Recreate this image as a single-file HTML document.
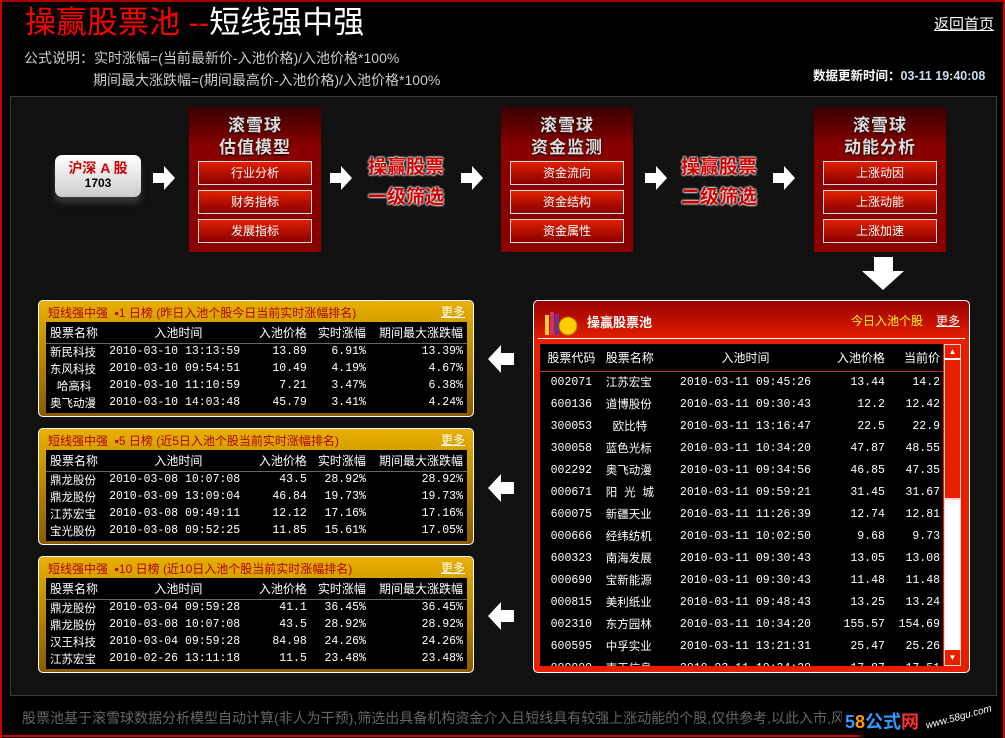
<!DOCTYPE html>
<html><head><meta charset="utf-8"><style>
*{margin:0;padding:0;box-sizing:border-box}
body{width:1005px;height:738px;background:#000;position:relative;overflow:hidden;font-family:"Liberation Sans","Noto Sans CJK SC",sans-serif;color:#fff}
.a{position:absolute}
.frame{left:0;top:0;width:1005px;height:738px;border-top:2px solid #a00;border-left:2px solid #c00;border-right:2px solid #c00}
.title{left:25px;top:3px;font-size:31px;line-height:40px;white-space:nowrap}
.f{font-size:14px;color:#ccc;white-space:nowrap}
.panel{left:10px;top:96px;width:987px;height:600px;background:#111;border:1px solid #3a3a3a}
.hs{left:55px;top:155px;width:86px;height:42px;border-radius:7px;background:linear-gradient(#fff,#ccc);text-align:center;font-weight:bold;box-shadow:0 6px 6px rgba(80,80,80,.6)}
.rb{width:132px;height:145px;background:linear-gradient(#3a0000 0,#8a0000 40px,#8a0000);text-align:center}
.rb .t{font-size:17px;font-weight:bold;color:#ddd;line-height:22px;margin-top:8px;letter-spacing:1px;text-shadow:0 1px 2px #000}
.btn{position:absolute;left:9px;width:114px;height:24px;border:1px solid #ddd;background:linear-gradient(#e02000,#8a0000);font-size:12px;line-height:22px;color:#fff}
.sx{font-size:19px;font-weight:bold;color:#c00;text-shadow:0 0 2px #fff,0 0 2px #fff,0 0 2px #fff;line-height:30px;white-space:nowrap}
.lt{left:38px;width:436px;height:117px;border-radius:5px;background:linear-gradient(#e8b000,#8a5a00);border:1px solid #fff}
.lt .h{position:absolute;left:9px;top:3px;font-size:12px;color:#b00000;white-space:nowrap}
.lt .m{position:absolute;right:8px;top:2px;font-size:12px;color:#fff;text-decoration:underline}
.lt .b{position:absolute;left:7px;top:21px;width:421px;height:91px;background:#000}
table{border-collapse:collapse}
.lt table{font-family:"Liberation Mono","Noto Sans CJK SC",monospace;font-size:11.5px;width:421px}
.lt td{height:17px;padding:0 4px;white-space:nowrap}
.lt tr.hd td{height:21px;border-bottom:1px solid #666;font-family:"Liberation Sans","Noto Sans CJK SC",sans-serif;font-size:12px}
.r{text-align:right}.c{text-align:center}
.la{width:26px;height:28px}
.rp{left:533px;top:300px;width:437px;height:373px;background:linear-gradient(#900 0,#e82000 40px,#e82000);border:1px solid #fff;border-radius:5px}
.rt{position:absolute;left:6px;top:43px;width:403px;height:322px;background:#000;overflow:hidden}
.rt table{font-family:"Liberation Mono","Noto Sans CJK SC",monospace;font-size:11.5px;width:403px}
.rt td{height:22px;white-space:nowrap;padding:0 3px}
.rt tr.hd td{height:27px;border-bottom:1px solid #a33;font-family:"Liberation Sans","Noto Sans CJK SC",sans-serif;font-size:12px}
</style></head><body>
<div class="a frame"></div>
<div class="a title"><span style="color:#f00">操赢股票池 --</span><span style="color:#fff">短线强中强</span></div>
<div class="a" style="left:934px;top:13px;font-size:15px;text-decoration:underline">返回首页</div>
<div class="a f" style="left:24px;top:48px">公式说明：实时涨幅=(当前最新价-入池价格)/入池价格*100%</div>
<div class="a f" style="left:93px;top:70px">期间最大涨跌幅=(期间最高价-入池价格)/入池价格*100%</div>
<div class="a" style="left:813px;top:65px;font-size:12.5px;font-weight:bold;white-space:nowrap">数据更新时间：<span style="color:#cde">03-11 19:40:08</span></div>
<div class="a panel"></div>

<div class="a hs"><div style="color:#c00;font-size:14px;margin-top:5px;line-height:16px">沪深 A 股</div><div style="color:#000;font-size:12px;line-height:14px">1703</div></div>

<svg class="a" style="left:153px;top:166px" width="23" height="25"><path d="M0 7H11V0L22 12L11 24V17H0Z" fill="#fff"/></svg>
<svg class="a" style="left:330px;top:166px" width="23" height="25"><path d="M0 7H11V0L22 12L11 24V17H0Z" fill="#fff"/></svg>
<svg class="a" style="left:461px;top:166px" width="23" height="25"><path d="M0 7H11V0L22 12L11 24V17H0Z" fill="#fff"/></svg>
<svg class="a" style="left:645px;top:166px" width="23" height="25"><path d="M0 7H11V0L22 12L11 24V17H0Z" fill="#fff"/></svg>
<svg class="a" style="left:773px;top:166px" width="23" height="25"><path d="M0 7H11V0L22 12L11 24V17H0Z" fill="#fff"/></svg>

<div class="a rb" style="left:189px;top:107px"><div class="t">滚雪球<br>估值模型</div>
<div class="btn" style="top:54px">行业分析</div><div class="btn" style="top:83px">财务指标</div><div class="btn" style="top:112px">发展指标</div></div>
<div class="a rb" style="left:501px;top:107px"><div class="t">滚雪球<br>资金监测</div>
<div class="btn" style="top:54px">资金流向</div><div class="btn" style="top:83px">资金结构</div><div class="btn" style="top:112px">资金属性</div></div>
<div class="a rb" style="left:814px;top:107px"><div class="t">滚雪球<br>动能分析</div>
<div class="btn" style="top:54px">上涨动因</div><div class="btn" style="top:83px">上涨动能</div><div class="btn" style="top:112px">上涨加速</div></div>

<div class="a sx" style="left:368px;top:153px">操赢股票<br>一级筛选</div>
<div class="a sx" style="left:681px;top:153px">操赢股票<br>二级筛选</div>

<svg class="a" style="left:862px;top:257px" width="43" height="34"><path d="M12 0H31V14H42L21 33L0 14H12Z" fill="#fff"/></svg>

<div class="a lt" style="top:300px"><div class="h">短线强中强 &nbsp;▪1 日榜 (昨日入池个股今日当前实时涨幅排名)</div><div class="m">更多</div>
<div class="b"><table><tr class="hd"><td>股票名称</td><td class="c">入池时间</td><td class="r">入池价格</td><td class="r">实时涨幅</td><td class="r">期间最大涨跌幅</td></tr>
<tr><td>新民科技</td><td>2010-03-10 13:13:59</td><td class="r">13.89</td><td class="r">6.91%</td><td class="r">13.39%</td></tr>
<tr><td>东风科技</td><td>2010-03-10 09:54:51</td><td class="r">10.49</td><td class="r">4.19%</td><td class="r">4.67%</td></tr>
<tr><td>&nbsp;哈高科</td><td>2010-03-10 11:10:59</td><td class="r">7.21</td><td class="r">3.47%</td><td class="r">6.38%</td></tr>
<tr><td>奥飞动漫</td><td>2010-03-10 14:03:48</td><td class="r">45.79</td><td class="r">3.41%</td><td class="r">4.24%</td></tr></table></div></div>

<div class="a lt" style="top:428px"><div class="h">短线强中强 &nbsp;▪5 日榜 (近5日入池个股当前实时涨幅排名)</div><div class="m">更多</div>
<div class="b"><table><tr class="hd"><td>股票名称</td><td class="c">入池时间</td><td class="r">入池价格</td><td class="r">实时涨幅</td><td class="r">期间最大涨跌幅</td></tr>
<tr><td>鼎龙股份</td><td>2010-03-08 10:07:08</td><td class="r">43.5</td><td class="r">28.92%</td><td class="r">28.92%</td></tr>
<tr><td>鼎龙股份</td><td>2010-03-09 13:09:04</td><td class="r">46.84</td><td class="r">19.73%</td><td class="r">19.73%</td></tr>
<tr><td>江苏宏宝</td><td>2010-03-08 09:49:11</td><td class="r">12.12</td><td class="r">17.16%</td><td class="r">17.16%</td></tr>
<tr><td>宝光股份</td><td>2010-03-08 09:52:25</td><td class="r">11.85</td><td class="r">15.61%</td><td class="r">17.05%</td></tr></table></div></div>

<div class="a lt" style="top:556px"><div class="h">短线强中强 &nbsp;▪10 日榜 (近10日入池个股当前实时涨幅排名)</div><div class="m">更多</div>
<div class="b"><table><tr class="hd"><td>股票名称</td><td class="c">入池时间</td><td class="r">入池价格</td><td class="r">实时涨幅</td><td class="r">期间最大涨跌幅</td></tr>
<tr><td>鼎龙股份</td><td>2010-03-04 09:59:28</td><td class="r">41.1</td><td class="r">36.45%</td><td class="r">36.45%</td></tr>
<tr><td>鼎龙股份</td><td>2010-03-08 10:07:08</td><td class="r">43.5</td><td class="r">28.92%</td><td class="r">28.92%</td></tr>
<tr><td>汉王科技</td><td>2010-03-04 09:59:28</td><td class="r">84.98</td><td class="r">24.26%</td><td class="r">24.26%</td></tr>
<tr><td>江苏宏宝</td><td>2010-02-26 13:11:18</td><td class="r">11.5</td><td class="r">23.48%</td><td class="r">23.48%</td></tr></table></div></div>

<svg class="a la" style="left:488px;top:345px" viewBox="0 0 26 28"><path d="M26 8H13V0L0 14L13 28V20H26Z" fill="#fff"/></svg>
<svg class="a la" style="left:488px;top:474px" viewBox="0 0 26 28"><path d="M26 8H13V0L0 14L13 28V20H26Z" fill="#fff"/></svg>
<svg class="a la" style="left:488px;top:602px" viewBox="0 0 26 28"><path d="M26 8H13V0L0 14L13 28V20H26Z" fill="#fff"/></svg>

<div class="a rp">
<svg class="a" style="left:10px;top:8px" width="34" height="28"><rect x="1" y="6" width="4" height="20" fill="#fc3"/><rect x="6" y="3" width="4" height="23" fill="#c36"/><rect x="11" y="5" width="4" height="21" fill="#639"/><circle cx="24" cy="17" r="9" fill="#fc0" stroke="#a70"/></svg>
<div class="a" style="left:53px;top:11px;font-size:13px;font-weight:bold">操赢股票池</div>
<div class="a" style="left:317px;top:11px;font-size:12px;color:#ff0">今日入池个股</div>
<div class="a" style="left:402px;top:11px;font-size:12px;text-decoration:underline">更多</div>
<div class="a" style="left:4px;top:37px;width:427px;height:1px;background:#fff"></div>
<div class="rt"><table><tr class="hd"><td class="c">股票代码</td><td>股票名称</td><td class="c">入池时间</td><td class="r">入池价格</td><td class="r">当前价</td></tr>
<tr><td class="c">002071</td><td>江苏宏宝</td><td class="c">2010-03-11 09:45:26</td><td class="r">13.44</td><td class="r">14.2</td></tr>
<tr><td class="c">600136</td><td>道博股份</td><td class="c">2010-03-11 09:30:43</td><td class="r">12.2</td><td class="r">12.42</td></tr>
<tr><td class="c">300053</td><td>&nbsp;欧比特</td><td class="c">2010-03-11 13:16:47</td><td class="r">22.5</td><td class="r">22.9</td></tr>
<tr><td class="c">300058</td><td>蓝色光标</td><td class="c">2010-03-11 10:34:20</td><td class="r">47.87</td><td class="r">48.55</td></tr>
<tr><td class="c">002292</td><td>奥飞动漫</td><td class="c">2010-03-11 09:34:56</td><td class="r">46.85</td><td class="r">47.35</td></tr>
<tr><td class="c">000671</td><td>阳 光 城</td><td class="c">2010-03-11 09:59:21</td><td class="r">31.45</td><td class="r">31.67</td></tr>
<tr><td class="c">600075</td><td>新疆天业</td><td class="c">2010-03-11 11:26:39</td><td class="r">12.74</td><td class="r">12.81</td></tr>
<tr><td class="c">000666</td><td>经纬纺机</td><td class="c">2010-03-11 10:02:50</td><td class="r">9.68</td><td class="r">9.73</td></tr>
<tr><td class="c">600323</td><td>南海发展</td><td class="c">2010-03-11 09:30:43</td><td class="r">13.05</td><td class="r">13.08</td></tr>
<tr><td class="c">000690</td><td>宝新能源</td><td class="c">2010-03-11 09:30:43</td><td class="r">11.48</td><td class="r">11.48</td></tr>
<tr><td class="c">000815</td><td>美利纸业</td><td class="c">2010-03-11 09:48:43</td><td class="r">13.25</td><td class="r">13.24</td></tr>
<tr><td class="c">002310</td><td>东方园林</td><td class="c">2010-03-11 10:34:20</td><td class="r">155.57</td><td class="r">154.69</td></tr>
<tr><td class="c">600595</td><td>中孚实业</td><td class="c">2010-03-11 13:21:31</td><td class="r">25.47</td><td class="r">25.26</td></tr>
<tr><td class="c">000000</td><td>南天信息</td><td class="c">2010-03-11 10:34:20</td><td class="r">17.87</td><td class="r">17.51</td></tr></table></div>
<div class="a" style="left:410px;top:43px;width:17px;height:322px;background:#fff;border:1px solid #fcc">
<div style="height:155px;background:#e82000;border-bottom:2px solid #fcc"></div>
<div class="a" style="left:0;top:0;width:15px;height:15px;background:#e82000;border-bottom:2px solid #fff;color:#fff;font-size:8px;text-align:center;line-height:13px">▲</div>
<div class="a" style="left:0;bottom:0;width:15px;height:15px;background:#e82000;color:#fff;font-size:8px;text-align:center;line-height:15px">▼</div></div>
</div>

<div class="a" style="left:22px;top:708px;font-size:14px;color:#666;white-space:nowrap;width:820px;overflow:hidden">股票池基于滚雪球数据分析模型自动计算(非人为干预),筛选出具备机构资金介入且短线具有较强上涨动能的个股,仅供参考,以此入市,风险自担</div>
<div class="a" style="left:845px;top:708px;font-size:18px;font-weight:bold;white-space:nowrap"><span style="color:#39f">5</span><span style="color:#f90">8</span><span style="color:#39f">公式</span><span style="color:#f33">网</span></div>
<div class="a" style="left:925px;top:712px;font-size:10px;font-style:italic;transform:rotate(-15deg);white-space:nowrap">www.58gu.com</div>
<div class="a" style="left:0;top:735px;width:860px;height:2px;background:#c00"></div>
</body></html>
